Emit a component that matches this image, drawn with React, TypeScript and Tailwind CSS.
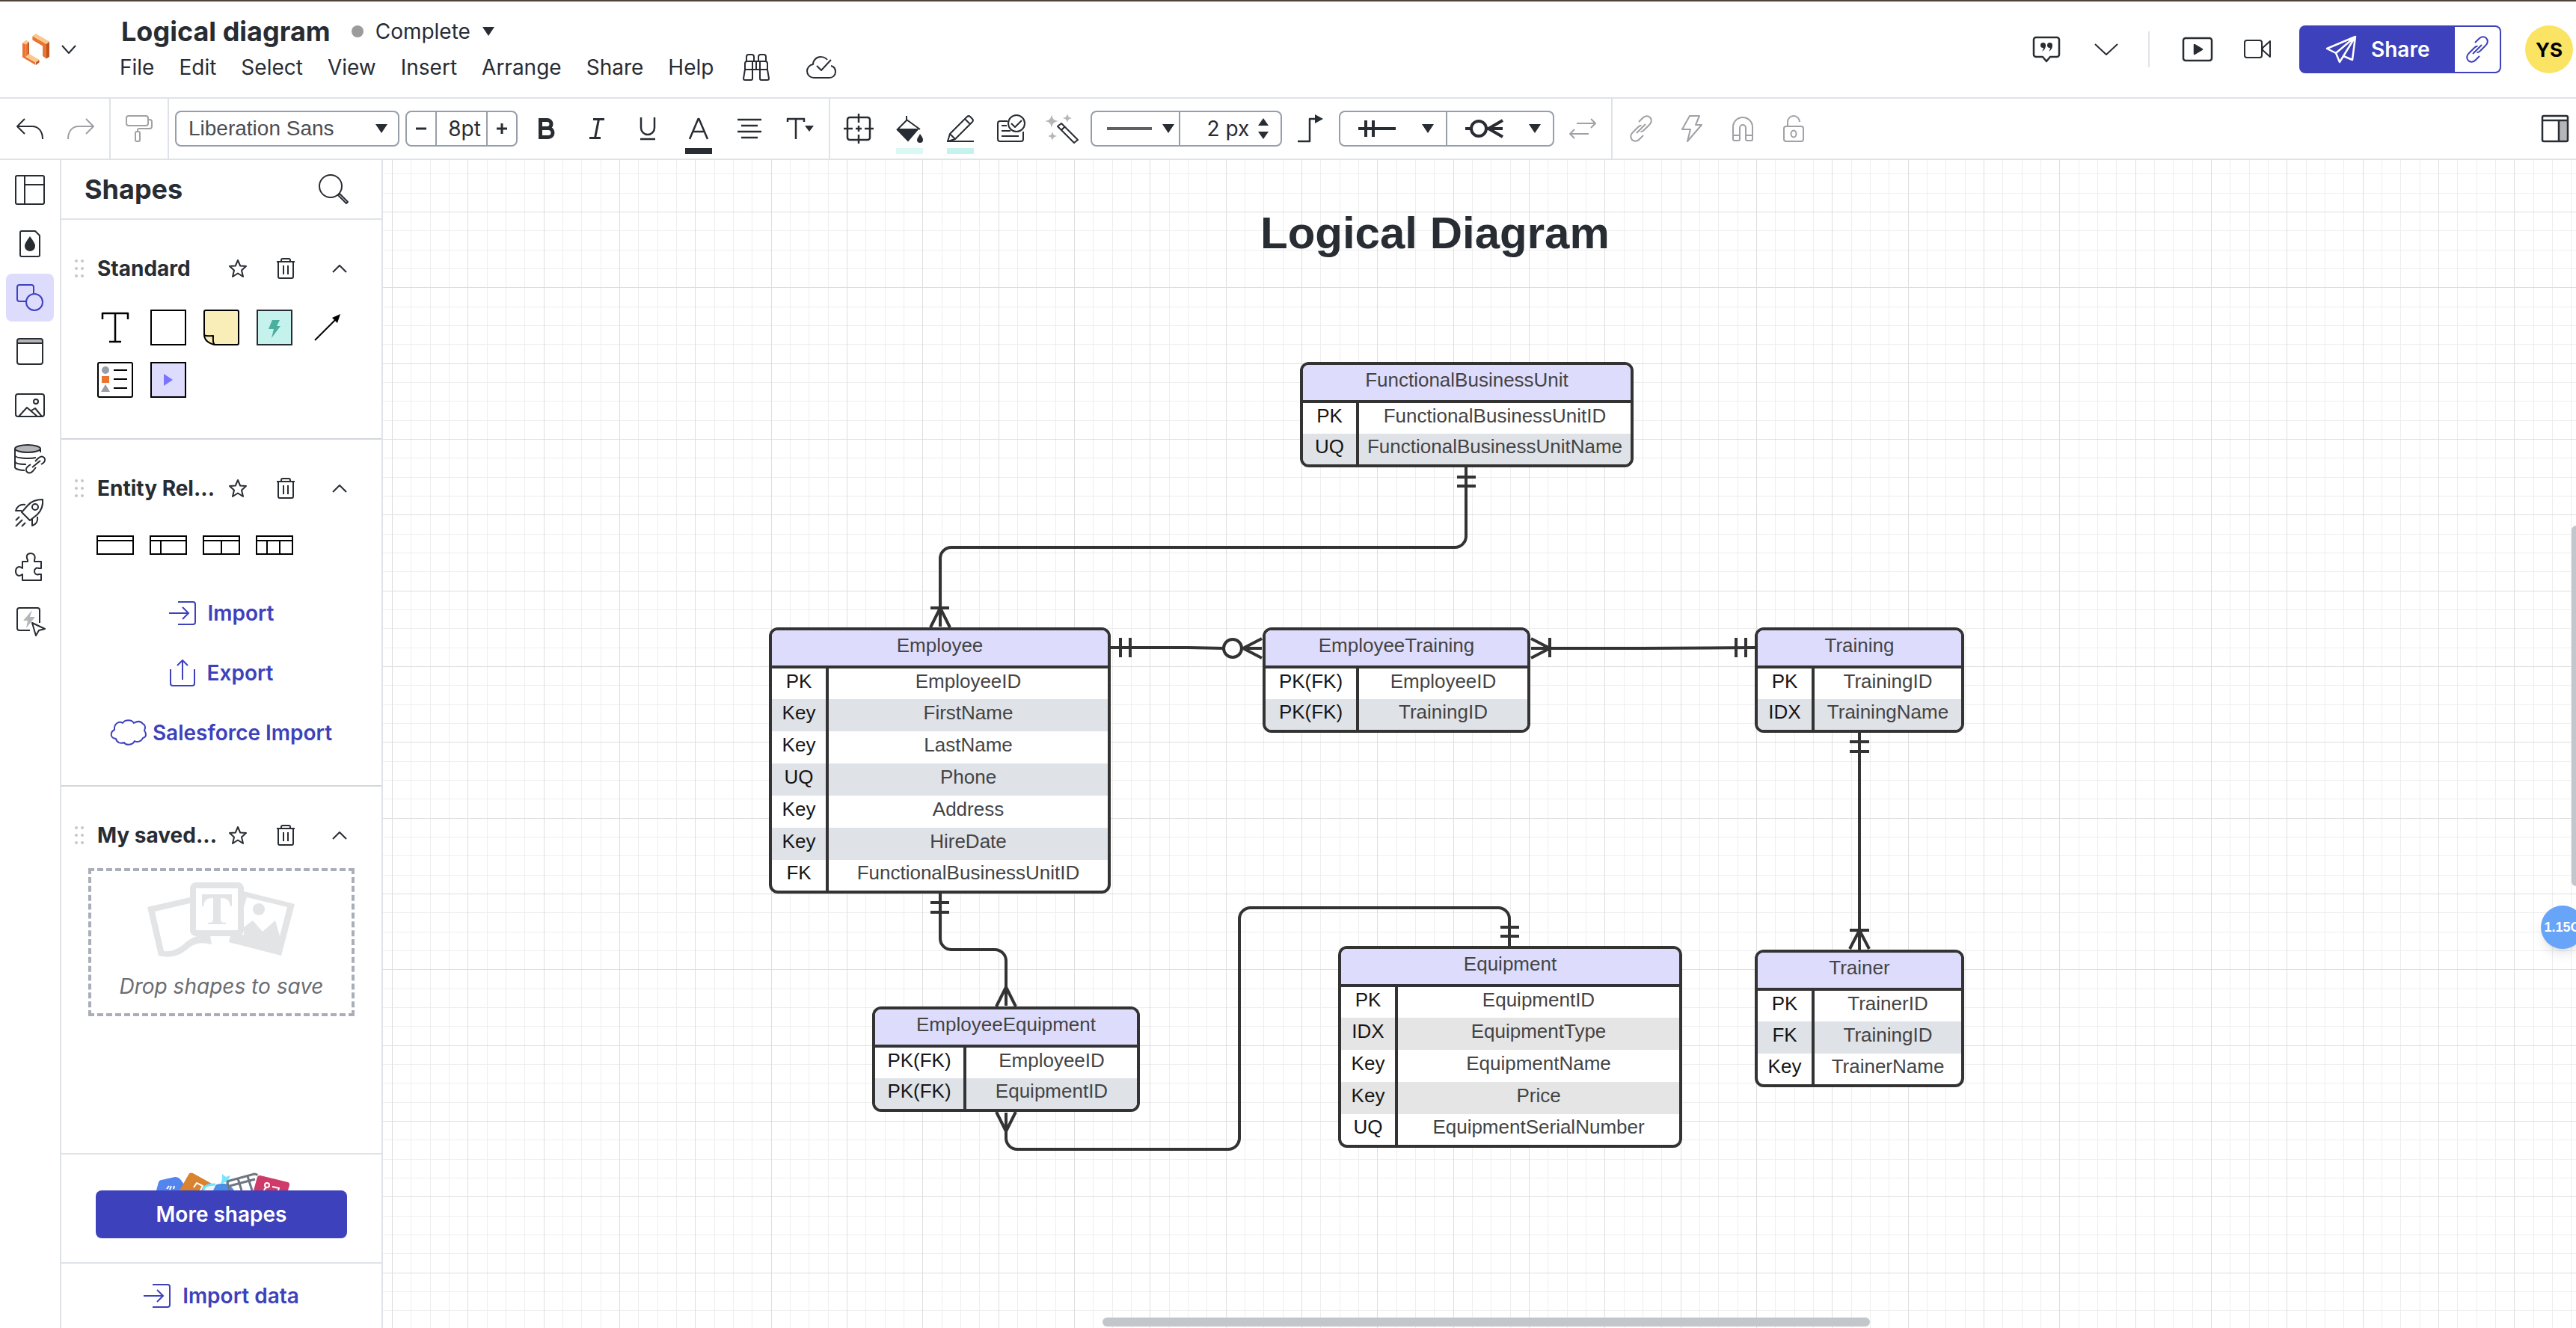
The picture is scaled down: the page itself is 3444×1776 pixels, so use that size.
import React from "react";

type IconProps = {
  w: number;
  h: number;
  sw?: number;
  className?: string;
  children: React.ReactNode;
};

function Icon({ w, h, sw = 2, className = "", children }: IconProps) {
  return (
    <svg
      width={w}
      height={h}
      viewBox={`0 0 ${w} ${h}`}
      fill="none"
      stroke="currentColor"
      strokeWidth={sw}
      strokeLinejoin="round"
      className={`shrink-0 overflow-visible ${className}`}
      aria-hidden="true"
    >
      {children}
    </svg>
  );
}

const Triangle = ({ className = "" }: { className?: string }) => (
  <Icon w={16} h={12} className={className}>
    <path d="M0 0H16L8 12Z" fill="currentColor" stroke="none" />
  </Icon>
);

const LinkIcon = () => (
  <Icon w={36} h={36}>
    <path d="M15 9l5-5c3-3.500 7.500-3.500 10-1s2.500 7-1 10l-7 7c-1.500 1.500-3 2.200-4.500 2.200M21 27l-5 5c-3 3.500-7.500 3.500-10 1s-2.500-7 1-10l7-7c1.500-1.500 3-2.200 4.500-2.200M12 24l12-12" />
  </Icon>
);

/* ---------- header ---------- */

function Logo() {
  return (
    <Icon w={36} h={42}>
      <g stroke="none">
        <path d="M0 12.500L5 8.500 9 11 4.500 14.500Z" fill="#f9c88a" />
        <path d="M0 12.500L4.500 14.500V31L17.500 38.500V42L0 31.500Z" fill="#ea7533" />
        <path d="M4.500 14.500L9 11V27L4.500 31Z" fill="#ea7533" />
        <path d="M7.500 12.200L9 11V27L7.500 28.300Z" fill="#bd5420" />
        <path d="M4.500 31L9 27 22.500 35 18 38.500Z" fill="#f9c88a" />
        <path d="M18 38.500L22.500 35V38.500L18 42Z" fill="#bd5420" />
        <path d="M13.500 3.500L18 0V5.500L13.500 8.500Z" fill="#f9c88a" />
        <path d="M18 0L36 10.500 32 14 13.500 3.500Z" fill="#f9c88a" />
        <path d="M13.500 3.500L32 14V33.500L27 30V16.500L13.500 8.500Z" fill="#ea7533" />
        <path d="M32 14L36 10.500V31L32 33.500Z" fill="#bd5420" />
      </g>
    </Icon>
  );
}

const MENU = ["File", "Edit", "Select", "View", "Insert", "Arrange", "Share", "Help"];

function Header() {
  return (
    <header className="flex h-32 shrink-0 items-center pr-1 pl-[30px]">
      <button aria-label="Home" className="flex items-center gap-4 text-[#282c33]">
        <Logo />
        <Icon w={20} h={12}>
          <path d="M1 1l9 10 9-10" />
        </Icon>
      </button>
      <div className="ml-[58px] flex flex-col">
        <div className="flex h-12 items-center">
          <h1 className="pl-0.5 text-[36px] font-bold">Logical diagram</h1>
          <span className="ml-7 size-4 rounded-full bg-[#9b9b9b]" />
          <button className="ml-4 flex items-center gap-4 text-[28px]">
            Complete
            <Triangle />
          </button>
        </div>
        <nav aria-label="Main menu" className="flex h-12 items-center gap-[33px] text-[28px]">
          {MENU.map((m) => (
            <button key={m}>{m}</button>
          ))}
          <button aria-label="Find" className="ml-1.5">
            <Icon w={36} h={36}>
              <path d="M5 11V4a3 3 0 0 1 3-3h4a3 3 0 0 1 3 3v7M21 11V4a3 3 0 0 1 3-3h4a3 3 0 0 1 3 3v7M3 21V13a3 3 0 0 1 3-3h7v11M33 21V13a3 3 0 0 0-3-3h-7v11M13 10h10M13 21H3L1 33a2 2 0 0 0 2 2h8a2 2 0 0 0 2-2ZM23 21h10l2 12a2 2 0 0 1-2 2h-8a2 2 0 0 1-2-2ZM13 21h10M18 10v11" />
            </Icon>
          </button>
          <button aria-label="Saved" className="ml-4">
            <Icon w={40} h={30}>
              <path d="M28 5C24 0 16 0 12 4c-2 2-3 5-3 7-5 1-8 5-8 9 0 5 4 9 9 9h21c4 0 8-3 8-8 0-4-2-7-6-8M14 13l6 6L33 5" />
            </Icon>
          </button>
        </nav>
      </div>

      <div className="ml-auto flex items-center">
        <button aria-label="Comments" className="flex w-20 justify-center">
          <Icon w={36} h={34} sw={2.5}>
            <path d="M4 1h28a3 3 0 0 1 3 3v20a3 3 0 0 1-3 3H23l-5 6-5-6H4a3 3 0 0 1-3-3V4a3 3 0 0 1 3-3Z" />
            <g fill="currentColor" stroke="none">
              <circle cx="13.500" cy="11.500" r="3.500" />
              <path d="M17 11.500c0 4-2 7-5 8.500 1.500-2 2-4 2-6Z" />
              <circle cx="22.500" cy="11.500" r="3.500" />
              <path d="M26 11.500c0 4-2 7-5 8.500 1.500-2 2-4 2-6Z" />
            </g>
          </Icon>
        </button>
        <button aria-label="More comments" className="flex w-20 justify-center">
          <Icon w={32} h={16}>
            <path d="M1 1l15 14L31 1" />
          </Icon>
        </button>
        <span className="mx-4 h-12 w-0.5 bg-[#dfe3e8]" />
        <button aria-label="Present" className="ml-2 flex w-20 justify-center">
          <Icon w={40} h={32} sw={2.5}>
            <rect x="1" y="1" width="38" height="30" rx="3" />
            <path d="M16 10v12l10-6Z" fill="currentColor" />
          </Icon>
        </button>
        <button aria-label="Video call" className="flex w-20 justify-center">
          <Icon w={36} h={26}>
            <rect x="1" y="1" width="23" height="23" rx="3" />
            <path d="M25 11L35 2v21L25 14Z" />
          </Icon>
        </button>
        <div className="ml-4 flex h-16">
          <button className="flex w-[208px] items-center gap-5 rounded-l-lg bg-[#3d41bc] pl-9 text-[28px] font-semibold text-white">
            <Icon w={40} h={36} sw={2.5}>
              <path d="M39 1L1 17l12 6ZM39 1L13 23l5 12 5-8ZM39 1l-4 31-12-5ZM39 1L23 27" />
            </Icon>
            Share
          </button>
          <button
            aria-label="Copy link"
            className="flex w-[62px] items-center justify-center rounded-r-lg border-2 border-l-0 border-[#3d41bc] text-[#3d41bc]"
          >
            <LinkIcon />
          </button>
        </div>
        <button className="ml-8 flex size-16 items-center justify-center rounded-full bg-[#fbe364] text-[26px] font-bold text-black">
          YS
        </button>
      </div>
    </header>
  );
}

/* ---------- toolbar ---------- */

function Tool({
  label,
  muted,
  bar,
  children,
}: {
  label: string;
  muted?: boolean;
  bar?: string;
  children: React.ReactNode;
}) {
  return (
    <button
      aria-label={label}
      className={`relative flex h-20 w-[68px] shrink-0 items-center justify-center ${muted ? "text-[#a0a1a5]" : ""}`}
    >
      {children}
      {bar && <span className={`absolute bottom-1.5 h-2 w-9 ${bar}`} />}
    </button>
  );
}

const Divider = () => <span className="mx-1 h-20 w-0.5 shrink-0 bg-[#dfe3e8]" />;

function Toolbar() {
  return (
    <div role="toolbar" className="flex h-[84px] shrink-0 items-center border-y-2 border-[#dfe3e8] pr-2.5 pl-1.5">
      <Tool label="Undo">
        <Icon w={36} h={28}>
          <path d="M11 1L1 11l10 10M1 11h20c8 0 14 6 14 17" />
        </Icon>
      </Tool>
      <Tool label="Redo" muted>
        <Icon w={36} h={28}>
          <path d="M25 1l10 10-10 10M35 11H15C7 11 1 17 1 28" />
        </Icon>
      </Tool>
      <Divider />
      <Tool label="Format painter" muted>
        <Icon w={36} h={36}>
          <rect x="1" y="1" width="29" height="13" rx="3" />
          <path d="M30 6h2a3 3 0 0 1 3 3v6a3 3 0 0 1-3 3H18a2 2 0 0 0-2 2v3" />
          <rect x="13" y="22" width="6" height="13" rx="2" />
        </Icon>
      </Tool>
      <Divider />
      <div className="relative ml-1 flex shrink-0 items-center">
        <select
          aria-label="Font"
          className="h-12 w-[300px] appearance-none rounded-lg border-2 border-[#979eaa] bg-white pl-4 font-['Liberation_Sans',sans-serif] text-[28px] text-[#4b4d53]"
        >
          <option>Liberation Sans</option>
        </select>
        <Triangle className="pointer-events-none absolute right-4" />
      </div>
      <div className="mr-1 ml-2 flex h-12 w-[150px] shrink-0 items-center rounded-lg border-2 border-[#979eaa] text-[28px]">
        <button aria-label="Decrease size" className="flex h-full w-10 items-center justify-center border-r-2 border-[#979eaa]">
          <Icon w={14} h={14} sw={3}>
            <path d="M0 7h14" />
          </Icon>
        </button>
        <input aria-label="Font size" defaultValue="8pt" className="h-full min-w-0 flex-1 pl-2 text-center outline-none" />
        <button aria-label="Increase size" className="flex h-full w-10 items-center justify-center border-l-2 border-[#979eaa]">
          <Icon w={14} h={14} sw={3}>
            <path d="M0 7h14M7 0v14" />
          </Icon>
        </button>
      </div>
      <Tool label="Bold">
        <Icon w={22} h={28} sw={5}>
          <path d="M3.500 2.500h9a5.500 5.500 0 0 1 0 11h-9ZM3.500 13.500h10.500a6 6 0 0 1 0 12H3.500Z" strokeLinejoin="miter" />
        </Icon>
      </Tool>
      <Tool label="Italic">
        <Icon w={20} h={28} sw={3}>
          <path d="M5 1.500h15M0 26.500h15M12.500 1.500l-5 25" />
        </Icon>
      </Tool>
      <Tool label="Underline">
        <Icon w={22} h={30} sw={2.5}>
          <path d="M2 0v14a9 9 0 0 0 18 0V0M1 29h20" />
        </Icon>
      </Tool>
      <Tool label="Text color" bar="bg-[#282c33]">
        <Icon w={26} h={28} sw={2.5}>
          <path d="M1 28L12.500 1h1L25 28M6 18h14" />
        </Icon>
      </Tool>
      <Tool label="Align text">
        <Icon w={32} h={26} sw={2.5}>
          <path d="M0 1h32M5 9h22M0 17h32M5 25h22" />
        </Icon>
      </Tool>
      <Tool label="Text options">
        <Icon w={36} h={28} sw={2.5}>
          <path d="M1 5V1h22v4M12 1v27" />
          <path d="M24 10h12l-6 8Z" fill="currentColor" stroke="none" />
        </Icon>
      </Tool>
      <Divider />
      <Tool label="Shape position">
        <Icon w={40} h={40} sw={2.5}>
          <rect x="5" y="5" width="30" height="30" rx="3" />
          <path d="M20 0v12M20 28v12M0 20h12M28 20h12M20 16v8M16 20h8" />
        </Icon>
      </Tool>
      <Tool label="Fill color" bar="bg-[#dcf8f4]">
        <Icon w={36} h={36}>
          <path d="M14 1v6L1 20M14 6l18 13" />
          <path d="M1 18h30L16 35.500 1 20Z" fill="currentColor" stroke="none" />
          <path d="M32 25c3 4 4 6 4 8a4 4 0 0 1-8 0c0-2 2-4 4-8Z" fill="currentColor" stroke="none" />
        </Icon>
      </Tool>
      <Tool label="Line color" bar="bg-[#c5f2ec]">
        <Icon w={36} h={36}>
          <path d="M1 35l3-10L27 2a3 3 0 0 1 4 0l3 3a3 3 0 0 1 0 4L11 32ZM24 5l7 7M4 25l7 7M0 35h36" />
        </Icon>
      </Tool>
      <Tool label="Shape options">
        <Icon w={38} h={38}>
          <path d="M14 9H4a3 3 0 0 0-3 3v21a3 3 0 0 0 3 3h28a3 3 0 0 0 3-3V23M6 15h7M6 22h12M6 29h23" />
          <circle cx="26" cy="12" r="11" />
          <path d="M19 12l5 5 9-9" />
        </Icon>
      </Tool>
      <Tool label="Magic format">
        <Icon w={44} h={40}>
          <path d="M16 17l5-4 22 22-5 4ZM21 22l5-5" />
          <g fill="#b5b6b9" stroke="none">
            <path d="M8 1c1 6 3 8 9 9-6 1-8 3-9 9-1-6-3-8-9-9 6-1 8-3 9-9Z" />
            <path d="M29 0c1 4 2 5 6 6-4 1-5 2-6 6-1-4-2-5-6-6 4-1 5-2 6-6ZM9 24c1 4 2 5 6 6-4 1-5 2-6 6-1-4-2-5-6-6 4-1 5-2 6-6Z" />
          </g>
        </Icon>
      </Tool>
      <div className="mx-1 flex h-12 w-[256px] shrink-0 rounded-lg border-2 border-[#979eaa] text-[28px]">
        <button aria-label="Line style" className="flex w-[118px] items-center justify-between border-r-2 border-[#979eaa] pr-1.5 pl-5">
          <span className="h-1 w-[60px] bg-[#5f6064]" />
          <Triangle />
        </button>
        <input aria-label="Line width" defaultValue="2 px" className="min-w-0 flex-1 pl-6 text-center outline-none" />
        <span className="flex flex-col justify-center gap-2 pr-4">
          <button aria-label="Thicker">
            <Icon w={14} h={10}>
              <path d="M0 10h14L7 0Z" fill="currentColor" stroke="none" />
            </Icon>
          </button>
          <button aria-label="Thinner">
            <Icon w={14} h={10}>
              <path d="M0 0h14L7 10Z" fill="currentColor" stroke="none" />
            </Icon>
          </button>
        </span>
      </div>
      <Tool label="Line shape">
        <Icon w={34} h={38} sw={2.5}>
          <path d="M0 36h16V6h8" />
          <path d="M23 0l11 6-11 6Z" fill="currentColor" stroke="none" />
        </Icon>
      </Tool>
      <div className="mx-1 flex h-12 w-[288px] shrink-0 rounded-lg border-2 border-[#979eaa]">
        <button aria-label="Line start" className="flex flex-1 items-center justify-between border-r-2 border-[#979eaa] pr-4 pl-6">
          <Icon w={50} h={22} sw={4}>
            <path d="M0 11h50M10 0v22M20 0v22" />
          </Icon>
          <Triangle />
        </button>
        <button aria-label="Line end" className="flex flex-1 items-center justify-between pr-4 pl-6">
          <Icon w={50} h={22} sw={4}>
            <path d="M0 11h7M29 11h21M50 0L31 11l19 11" />
            <circle cx="18" cy="11" r="10" />
          </Icon>
          <Triangle />
        </button>
      </div>
      <Tool label="Swap ends" muted>
        <Icon w={36} h={28}>
          <path d="M10 7h25M29 1l6 6-6 6M26 21H1M7 15l-6 6 6 6" />
        </Icon>
      </Tool>
      <Divider />
      <Tool label="Link" muted>
        <LinkIcon />
      </Tool>
      <Tool label="Action" muted>
        <Icon w={28} h={36}>
          <path d="M11 1h13l-5 12h8L8 35l4-16H1Z" />
        </Icon>
      </Tool>
      <Tool label="Magnet" muted>
        <Icon w={28} h={34}>
          <path d="M1 31V15a13 13 0 0 1 26 0v16a2 2 0 0 1-2 2h-5a2 2 0 0 1-2-2V16a4 4 0 0 0-8 0v15a2 2 0 0 1-2 2H3a2 2 0 0 1-2-2ZM1 26h9M18 26h9" />
        </Icon>
      </Tool>
      <Tool label="Lock" muted>
        <Icon w={28} h={36}>
          <rect x="1" y="15" width="26" height="20" rx="3" />
          <path d="M6 15V9a8 8 0 0 1 16 0" />
          <ellipse cx="14" cy="25" rx="3.500" ry="4.500" />
        </Icon>
      </Tool>
      <button aria-label="Context panel" className="ml-auto">
        <Icon w={36} h={36} sw={2.5}>
          <rect x="23" y="8" width="12" height="27" fill="#b5b6b9" stroke="none" />
          <rect x="1" y="1" width="34" height="34" rx="2" />
          <path d="M1 7h34M23 7v28" />
        </Icon>
      </button>
    </div>
  );
}

/* ---------- left rail ---------- */

const RAIL: { label: string; icon: React.ReactNode; active?: boolean }[] = [
  {
    label: "Templates",
    icon: (
      <Icon w={40} h={40}>
        <rect x="1" y="1" width="38" height="38" rx="2" />
        <path d="M13 1v38M13 13h26" />
      </Icon>
    ),
  },
  {
    label: "Theme",
    icon: (
      <Icon w={28} h={36}>
        <path d="M3 1h18l6 6v26a2 2 0 0 1-2 2H3a2 2 0 0 1-2-2V3a2 2 0 0 1 2-2Z" />
        <path d="M14 8c5 7 7 10 7 13a7 7 0 0 1-14 0c0-3 2-6 7-13Z" fill="currentColor" stroke="none" />
      </Icon>
    ),
  },
  {
    label: "Shapes",
    active: true,
    icon: (
      <Icon w={36} h={36}>
        <path d="M12 23H4a3 3 0 0 1-3-3V4a3 3 0 0 1 3-3h16a3 3 0 0 1 3 3v8" />
        <circle cx="24" cy="24" r="11" />
      </Icon>
    ),
  },
  {
    label: "Containers",
    icon: (
      <Icon w={36} h={36}>
        <rect x="1" y="1" width="34" height="6" fill="#b5b6b9" stroke="none" />
        <rect x="1" y="1" width="34" height="34" rx="3" />
        <path d="M1 7h34" />
      </Icon>
    ),
  },
  {
    label: "Images",
    icon: (
      <Icon w={40} h={32}>
        <rect x="1" y="1" width="38" height="30" rx="3" />
        <path d="M5 31l11-12 14 12M22 23l5-3 9 11" />
        <circle cx="28" cy="11" r="3" />
      </Icon>
    ),
  },
  {
    label: "Data",
    icon: (
      <Icon w={42} h={40}>
        <ellipse cx="18" cy="6" rx="17" ry="5" fill="#b5b6b9" />
        <path d="M1 6v25c0 2 6 4 13 4M35 6v5M1 15c0 4 20 5 28 3M1 23c0 3 8 4 15 4" />
        <path d="M28 23l4-4c3-3 6-3 8-1s1 5-1 7l-3 2M29 31l-4 5c-3 3-6 3-8 1s-1-5 1-7l4-3M24 31l11-9" />
      </Icon>
    ),
  },
  {
    label: "Quick start",
    icon: (
      <Icon w={40} h={40}>
        <path d="M37 2c1 9-2 15-7 20l-10 8-11-11 8-9C22 4 28 2 37 2ZM9 17H1c2-6 6-9 13-8M23 28v9c6-2 8-6 7-12" />
        <circle cx="27" cy="12" r="4" />
        <path d="M6 25l-5 5M10 29l-9 9M14 33l-5 5" />
      </Icon>
    ),
  },
  {
    label: "Integrations",
    icon: (
      <Icon w={40} h={38}>
        <path d="M10 12h7v-2c-3-6 0-9 4-9s7 3 5 9v2h9v9h-3c-8-3-8 11 0 8h3v8H10v-8c-5 4-9 1-9-4s4-8 9-4Z" />
      </Icon>
    ),
  },
  {
    label: "Actions",
    icon: (
      <Icon w={34} h={36}>
        <path d="M17 31H3a3 3 0 0 1-3-3V4a3 3 0 0 1 3-3h24a3 3 0 0 1 3 3v17" />
        <path d="M20 4L8 18h6l-2 10 12-15h-7Z" fill="#b5b6b9" stroke="none" />
        <path d="M20 21l17 8-8 2-4 7Z" fill="#fff" />
      </Icon>
    ),
  },
];

function Rail() {
  return (
    <nav aria-label="Panels" className="flex w-[82px] shrink-0 flex-col items-center gap-2 border-r-2 border-[#dfe3e8] pt-2">
      {RAIL.map((r) => (
        <button
          key={r.label}
          aria-label={r.label}
          className={`flex size-16 items-center justify-center rounded-lg ${r.active ? "bg-[#dedcfc] text-[#3d41bc]" : ""}`}
        >
          {r.icon}
        </button>
      ))}
    </nav>
  );
}

/* ---------- shapes panel ---------- */

function SectionHead({ title }: { title: string }) {
  return (
    <div className="mt-[33px] flex h-16 items-center pr-4 pl-[18px]">
      <Icon w={14} h={26}>
        <g fill="#c6c7ca" stroke="none">
          <circle cx="2" cy="3" r="2" />
          <circle cx="10" cy="3" r="2" />
          <circle cx="2" cy="13" r="2" />
          <circle cx="10" cy="13" r="2" />
          <circle cx="2" cy="23" r="2" />
          <circle cx="10" cy="23" r="2" />
        </g>
      </Icon>
      <h3 className="ml-4 flex-1 text-[28px] font-bold whitespace-nowrap">{title}</h3>
      <div className="flex shrink-0 items-center">
        <button aria-label={`Favorite ${title}`} className="flex w-10 justify-center">
          <Icon w={24} h={26}>
            <path d="M12 2l3.200 7.500L23 10l-6 5.500L19 24l-7-4.500L5 24l2-8.500L1 10l7.800-.500Z" />
          </Icon>
        </button>
        <button aria-label={`Remove ${title}`} className="ml-3 flex w-16 justify-center">
          <Icon w={24} h={28}>
            <path d="M0 5h24M6 5V3a2 2 0 0 1 2-2h8a2 2 0 0 1 2 2v2M2 5v20a2 2 0 0 0 2 2h16a2 2 0 0 0 2-2V5M9 10v12M15 10v12" />
          </Icon>
        </button>
        <button aria-label={`Collapse ${title}`} className="flex w-20 justify-center">
          <Icon w={20} h={12}>
            <path d="M1 11l9-9 9 9" />
          </Icon>
        </button>
      </div>
    </div>
  );
}

function Cell({ label, children }: { label: string; children: React.ReactNode }) {
  return (
    <button aria-label={label} className="flex size-12 items-center justify-center text-black">
      {children}
    </button>
  );
}

const EnterIcon = () => (
  <Icon w={36} h={32}>
    <path d="M12 1h20a3 3 0 0 1 3 3v24a3 3 0 0 1-3 3H12M0 16h25M18 8l8 8-8 8" strokeLinejoin="miter" />
  </Icon>
);

const ER_SHAPES = [
  { label: "Entity", d: "" },
  { label: "Entity with key column", d: "M15 7v17" },
  { label: "Entity with two columns", d: "M25 7v17" },
  { label: "Entity with three columns", d: "M15 7v17M32 7v17" },
];

function ShapesPanel() {
  return (
    <aside className="flex w-[430px] shrink-0 flex-col border-r-2 border-[#dfe3e8]">
      <div className="flex h-20 shrink-0 items-center justify-between border-b-2 border-[#dfe3e8] pr-11 pl-[31px]">
        <h2 className="text-[36px] font-bold">Shapes</h2>
        <button aria-label="Search shapes">
          <Icon w={40} h={40}>
            <circle cx="16" cy="16" r="15" />
            <path d="M26 28l2-2 11 11-2 2Z" />
          </Icon>
        </button>
      </div>
      <div className="min-h-0 flex-1 overflow-hidden">
        <section className="border-b-2 border-[#d3d7dc] pb-[54px]">
          <SectionHead title="Standard" />
          <div className="mt-[23px] grid grid-cols-[repeat(5,48px)] gap-x-[23px] gap-y-[22px] pl-12">
            <Cell label="Text">
              <Icon w={36} h={40} sw={2.5}>
                <path d="M1 9V1h34v8M18 1v38M10 39h16" />
              </Icon>
            </Cell>
            <Cell label="Block">
              <span className="size-12 border-2 border-black bg-white" />
            </Cell>
            <Cell label="Sticky note">
              <Icon w={48} h={48}>
                <path d="M3 1h42a2 2 0 0 1 2 2v42a2 2 0 0 1-2 2H15C6 45 1 40 1 33V3a2 2 0 0 1 2-2Z" fill="#f9edb8" />
                <path d="M1 34c2 2 7 1 12 1 0 5-1 10 2 12" />
              </Icon>
            </Cell>
            <Cell label="Dynamic shape">
              <Icon w={48} h={48}>
                <rect x="1" y="1" width="46" height="46" fill="#c5f2ec" stroke="#282c33" strokeLinejoin="miter" />
                <path d="M21 14h10l-4 8h5L20 38l3-12h-7Z" fill="#4cae9c" stroke="none" />
              </Icon>
            </Cell>
            <Cell label="Line">
              <Icon w={36} h={36}>
                <path d="M1 35L28 8" />
                <path d="M35 0l-4 12-7-7Z" fill="currentColor" stroke="none" />
              </Icon>
            </Cell>
            <Cell label="Legend">
              <Icon w={48} h={48}>
                <rect x="1" y="1" width="46" height="46" rx="2" />
                <path d="M22 11h18M22 23h18M22 35h18" />
                <circle cx="11" cy="11" r="5" fill="#979ea9" stroke="none" />
                <rect x="6" y="19" width="10" height="9" fill="#ea7533" stroke="none" />
                <path d="M5 40h12l-6-10Z" fill="#979ea9" stroke="none" />
              </Icon>
            </Cell>
            <Cell label="Video">
              <Icon w={48} h={48}>
                <rect x="1" y="1" width="46" height="46" fill="#dedcfc" strokeLinejoin="miter" />
                <path d="M18 16v16l12-8Z" fill="#7b73ff" stroke="none" />
              </Icon>
            </Cell>
          </div>
        </section>

        <section className="border-b-2 border-[#d3d7dc] pb-[30px]">
          <SectionHead title="Entity Rel..." />
          <div className="mt-5 grid grid-cols-[repeat(5,48px)] gap-x-[23px] pl-12">
            {ER_SHAPES.map((s) => (
              <Cell key={s.label} label={s.label}>
                <Icon w={50} h={26}>
                  <rect x="1" y="1" width="48" height="24" strokeLinejoin="miter" />
                  <path d={`M1 7h48${s.d}`} />
                </Icon>
              </Cell>
            ))}
          </div>
          <div className="mt-[27px] flex flex-col items-center text-[28px] font-semibold text-[#3d41bc]">
            <button className="flex h-20 items-center gap-4">
              <EnterIcon />
              Import
            </button>
            <button className="flex h-20 items-center gap-4">
              <Icon w={34} h={36}>
                <path d="M1 13v19a3 3 0 0 0 3 3h26a3 3 0 0 0 3-3V13M17 27V1M10 8l7-7 7 7" />
              </Icon>
              Export
            </button>
            <button className="flex h-20 items-center gap-2">
              <Icon w={48} h={36}>
                <path d="M16 5c3-5 12-5 15 0 5-3 9-3 12 1 3 1 4 5 2 9 3 4 3 9-2 10-2 5-8 6-11 4-3 6-12 6-14 2-5 2-10 0-11-5-8-1-8-9-2-12-1-9 7-12 11-9Z" />
              </Icon>
              Salesforce Import
            </button>
          </div>
        </section>

        <section>
          <SectionHead title="My saved..." />
          <div className="mx-9 mt-3 flex h-[198px] flex-col items-center justify-between border-4 border-dashed border-[#a9aeb8] pt-[15px] pb-4">
            <Icon w={198} h={102}>
              <g fill="#e3e4e6" stroke="none">
                <path
                  fillRule="evenodd"
                  d="M0 33L57 20v8L10 39l12 53c8 1 16-1 25-8 10-9 18-13 27-13v-5h9l3 17c-13-3-22-3-32 6-12 10-24 13-39 9Z"
                />
                <path
                  fillRule="evenodd"
                  d="M65 0h56a8 8 0 0 1 8 8v56a8 8 0 0 1-8 8H65a8 8 0 0 1-8-8V8a8 8 0 0 1 8-8ZM65 8v56h56V8Z"
                />
                <path d="M73 16h40v16h-2c-1-8-4-11-13-11v28c0 4 2 5 7 5v2H81v-2c5 0 7-1 7-5V21c-9 0-12 3-13 11h-2Z" />
                <path
                  fillRule="evenodd"
                  d="M129 12l68 17-18 69-70-18 2-8 18-2ZM133 20l-4 13v27l12-9 13 15 17-15 6 21 10-39Z"
                />
                <circle cx="149" cy="36" r="8" />
              </g>
            </Icon>
            <p className="text-[28px] leading-10 text-[#6b6d71] italic">Drop shapes to save</p>
          </div>
        </section>
      </div>

      <div className="flex shrink-0 flex-col items-center border-y-2 border-[#dfe3e8] pt-6 pb-8">
        <svg width="186" height="24" viewBox="-6 0 186 24" fill="none" className="block" aria-hidden="true">
          <path d="M0 24L3 13c1-2 2-3 4-3l18-4c3 0 5 1 7 3l11 15Z" fill="#5385ef" />
          <path d="M14 22l3-4M18 23l2-5M23 22l1-4" stroke="#fff" strokeWidth="2" />
          <path d="M31 24L43 3c1-3 4-3 6-2l27 15v8Z" fill="#d9822f" />
          <path d="M50 20l4-6 8 4-3 6" stroke="#fff" strokeWidth="2" />
          <path d="M73 24c2-6 8-9 14-9 8-1 14 4 17 9Z" fill="#4a8ee6" />
          <path d="M62 24c0-6 8-8 18-8l-4 8Z" fill="#f1f3f8" />
          <path d="M63 24c0-6 7-8 16-8" stroke="#6ee3fa" strokeWidth="3" />
          <path d="M88 2l5 4 6-2-3 6 2 4-6-1-6 2 2-6Z" fill="#79e4fb" />
          <path d="M98 24l-3-10c0-2 1-3 3-3l33-9c2 0 3 0 4 2M98 18l34-9M109 8l5 16M122 5l6 19" stroke="#6f7683" strokeWidth="3" />
          <path d="M130 24l5-18c1-2 3-2 4-2l37 9c2 1 2 2 2 4l-2 7Z" fill="#cf3b68" />
          <circle cx="148" cy="17" r="3" stroke="#fff" strokeWidth="2" />
          <path d="M144 24c1-3 3-4 4-4M155 19l9 2-1 3" stroke="#fff" strokeWidth="2" />
        </svg>
        <button className="h-16 w-[336px] rounded-lg bg-[#3d41bc] text-[28px] font-semibold text-white">More shapes</button>
      </div>
      <button className="flex h-[86px] shrink-0 items-center justify-center gap-4 text-[28px] font-semibold text-[#3d41bc]">
        <EnterIcon />
        Import data
      </button>
    </aside>
  );
}

/* ---------- canvas ---------- */

type Entity = {
  name: string;
  box: string;
  keyCol: string;
  stripe: string;
  rows: [string, string][];
};

const BLUE_STRIPE = "even:bg-[#dfe2e7]";
const GRAY_STRIPE = "even:bg-[#e5e5e5]";

const ENTITIES: Entity[] = [
  {
    name: "FunctionalBusinessUnit",
    box: "left-[1226px] top-[270px] w-[446px]",
    keyCol: "w-[75px]",
    stripe: BLUE_STRIPE,
    rows: [
      ["PK", "FunctionalBusinessUnitID"],
      ["UQ", "FunctionalBusinessUnitName"],
    ],
  },
  {
    name: "Employee",
    box: "left-[516px] top-[625px] w-[457px]",
    keyCol: "w-[76px]",
    stripe: BLUE_STRIPE,
    rows: [
      ["PK", "EmployeeID"],
      ["Key", "FirstName"],
      ["Key", "LastName"],
      ["UQ", "Phone"],
      ["Key", "Address"],
      ["Key", "HireDate"],
      ["FK", "FunctionalBusinessUnitID"],
    ],
  },
  {
    name: "EmployeeTraining",
    box: "left-[1176px] top-[625px] w-[358px]",
    keyCol: "w-[125px]",
    stripe: BLUE_STRIPE,
    rows: [
      ["PK(FK)", "EmployeeID"],
      ["PK(FK)", "TrainingID"],
    ],
  },
  {
    name: "Training",
    box: "left-[1834px] top-[625px] w-[280px]",
    keyCol: "w-[76px]",
    stripe: BLUE_STRIPE,
    rows: [
      ["PK", "TrainingID"],
      ["IDX", "TrainingName"],
    ],
  },
  {
    name: "EmployeeEquipment",
    box: "left-[654px] top-[1132px] w-[358px]",
    keyCol: "w-[122px]",
    stripe: BLUE_STRIPE,
    rows: [
      ["PK(FK)", "EmployeeID"],
      ["PK(FK)", "EquipmentID"],
    ],
  },
  {
    name: "Equipment",
    box: "left-[1277px] top-[1051px] w-[460px]",
    keyCol: "w-[76px]",
    stripe: GRAY_STRIPE,
    rows: [
      ["PK", "EquipmentID"],
      ["IDX", "EquipmentType"],
      ["Key", "EquipmentName"],
      ["Key", "Price"],
      ["UQ", "EquipmentSerialNumber"],
    ],
  },
  {
    name: "Trainer",
    box: "left-[1834px] top-[1056px] w-[280px]",
    keyCol: "w-[76px]",
    stripe: BLUE_STRIPE,
    rows: [
      ["PK", "TrainerID"],
      ["FK", "TrainingID"],
      ["Key", "TrainerName"],
    ],
  },
];

function EntityNode({ e }: { e: Entity }) {
  return (
    <div className={`absolute overflow-hidden rounded-xl border-4 border-[#333] bg-white text-[26px] text-[#444] ${e.box}`}>
      <table className="w-full table-fixed border-separate border-spacing-0 text-center">
        <colgroup>
          <col className={e.keyCol} />
          <col />
        </colgroup>
        <thead>
          <tr className="h-[51px] bg-[#dedcfc]">
            <th colSpan={2} className="border-b-4 border-[#333] p-0 pb-2 leading-8 font-normal">
              {e.name}
            </th>
          </tr>
        </thead>
        <tbody>
          {e.rows.map(([k, v]) => (
            <tr key={k + v} className={`h-[43px] first:h-[41px] last:h-[41px] ${e.stripe}`}>
              <td className="border-r-4 border-[#333] p-0 pb-2 leading-8 text-[#151515]">{k}</td>
              <td className="p-0 pb-2 leading-8">{v}</td>
            </tr>
          ))}
        </tbody>
      </table>
    </div>
  );
}

function Grid() {
  const minor = [25, 51, 76, 127, 152, 177, 228, 253, 279];
  const major = [0, 101, 203];
  return (
    <svg className="absolute inset-0 h-full w-full" aria-hidden="true" shapeRendering="crispEdges">
      <defs>
        <pattern id="grid" width="304" height="304" x="12" y="69" patternUnits="userSpaceOnUse">
          {minor.map((n) => (
            <path key={n} d={`M${n} 0h1v304h-1ZM0 ${n}h304v1H0Z`} fill="#eeeeef" />
          ))}
          {major.map((n) => (
            <path key={n} d={`M${n} 0h1v304h-1ZM0 ${n}h304v1H0Z`} fill="#dedede" />
          ))}
        </pattern>
      </defs>
      <rect width="100%" height="100%" fill="url(#grid)" />
    </svg>
  );
}

function Connectors() {
  return (
    <svg
      className="absolute inset-0 h-full w-full"
      fill="none"
      stroke="#333"
      strokeWidth="4"
      aria-hidden="true"
    >
      <g transform="translate(-512 -214)">
        {/* FunctionalBusinessUnit to Employee */}
        <path d="M1960 624V717a15 15 0 0 1-15 15H1272a15 15 0 0 0-15 15V838" />
        <path d="M1948 638h25M1948 650h25M1244 813h25M1244 839l13-26 13 26" />
        {/* Employee to EmployeeTraining */}
        <path d="M1484 866H1588L1636 867M1498 853v26M1511 853v26" />
        <circle cx="1648" cy="867" r="12" fill="#fff" />
        <path d="M1662 867H1687M1687 854l-25 13 25 13" />
        {/* EmployeeTraining to Training */}
        <path d="M2047 867H2195L2347 866M2047 854l25 13-25 13M2072 853v26M2321 853v26M2334 853v26" />
        {/* Training to Trainer */}
        <path d="M2486 978V1270M2473 992h26M2473 1005h26M2473 1244h26M2473 1269l13-25 13 25" />
        {/* Employee to EmployeeEquipment */}
        <path d="M1257 1194V1255a15 15 0 0 0 15 15H1330a15 15 0 0 1 15 15V1345" />
        <path d="M1244 1207h25M1244 1220h25M1332 1346l13-26 13 26" />
        {/* EmployeeEquipment to Equipment */}
        <path d="M1345 1488V1522a15 15 0 0 0 15 15H1642a15 15 0 0 0 15-15V1229a15 15 0 0 1 15-15H2003a15 15 0 0 1 15 15V1266" />
        <path d="M1332 1487l13 26 13-26M2006 1240h25M2006 1252h25" />
      </g>
    </svg>
  );
}

function Canvas() {
  return (
    <main className="relative min-w-0 flex-1 overflow-hidden bg-white font-['Liberation_Sans',Arial,sans-serif]">
      <Grid />
      <Connectors />
      <h2 className="absolute top-[62px] left-[1173px] text-[60px] leading-[72px] font-bold text-[#282c33]">
        Logical Diagram
      </h2>
      {ENTITIES.map((e) => (
        <EntityNode key={e.name} e={e} />
      ))}
      <div className="absolute bottom-0.5 left-[962px] h-3 w-[1026px] rounded-full bg-[#c3c6cb]" />
      <div className="absolute top-[489px] right-0 h-[482px] w-1.5 rounded-l-full bg-[#c3c6cb]" />
      <div className="absolute top-[997px] -right-[11px] flex size-[58px] items-center justify-center rounded-full bg-[#68a4f8] text-[18px] font-bold text-white shadow-lg">
        1.15G
      </div>
    </main>
  );
}

export default function App() {
  return (
    <div className="flex h-screen flex-col overflow-hidden border-t-2 border-[#51443a] bg-white font-['Inter',sans-serif] text-[#282c33]">
      <Header />
      <Toolbar />
      <div className="flex min-h-0 flex-1">
        <Rail />
        <ShapesPanel />
        <Canvas />
      </div>
    </div>
  );
}
